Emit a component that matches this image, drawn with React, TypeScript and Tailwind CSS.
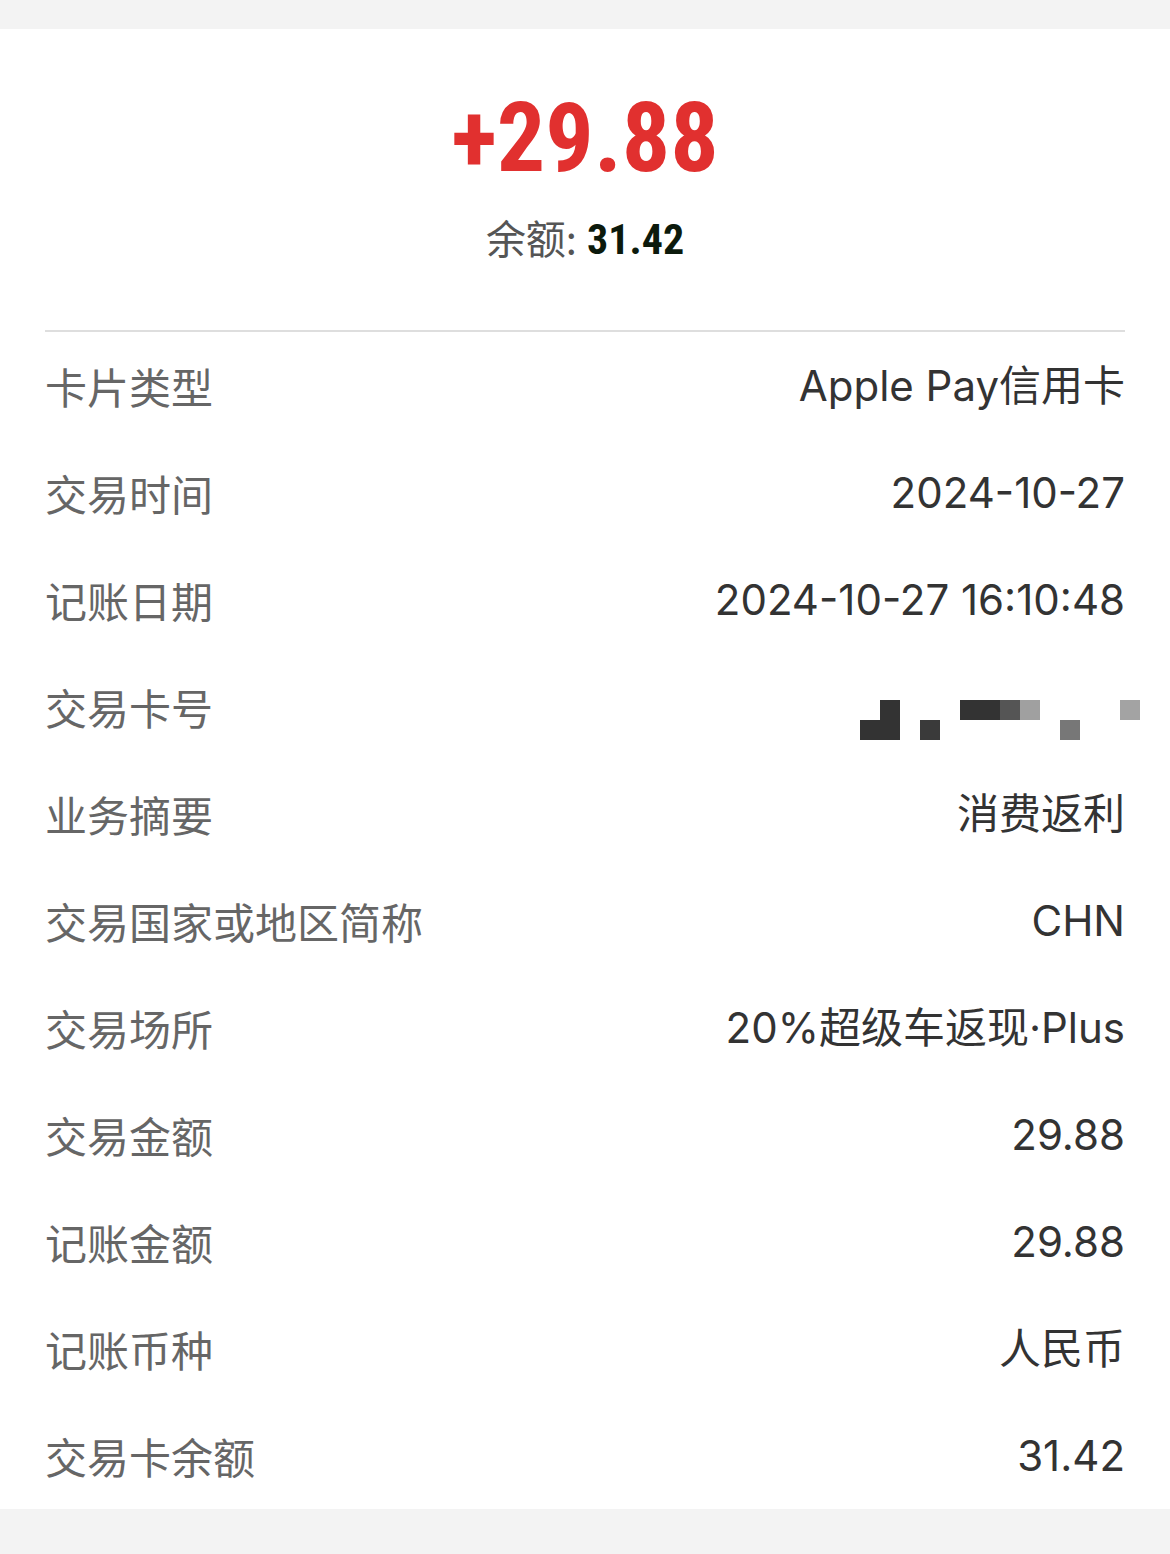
import React from 'react';

const rows: { label: string; value?: string }[] = [
  { label: '卡片类型', value: 'Apple Pay信用卡' },
  { label: '交易时间', value: '2024-10-27' },
  { label: '记账日期', value: '2024-10-27 16:10:48' },
  { label: '交易卡号' },
  { label: '业务摘要', value: '消费返利' },
  { label: '交易国家或地区简称', value: 'CHN' },
  { label: '交易场所', value: '20%超级车返现·Plus' },
  { label: '交易金额', value: '29.88' },
  { label: '记账金额', value: '29.88' },
  { label: '记账币种', value: '人民币' },
  { label: '交易卡余额', value: '31.42' },
];

// mosaic blocks covering the card number
const blocks = [
  { x: 20, y: 0, c: '#333333' },
  { x: 0, y: 20, c: '#333333' },
  { x: 20, y: 20, c: '#333333' },
  { x: 60, y: 20, c: '#3a3a3a' },
  { x: 100, y: 0, c: '#333333' },
  { x: 120, y: 0, c: '#333333' },
  { x: 140, y: 0, c: '#555555' },
  { x: 160, y: 0, c: '#a0a0a0' },
  { x: 200, y: 20, c: '#777777' },
  { x: 260, y: 0, c: '#a3a3a3' },
];

const Mosaic: React.FC = () => (
  <svg width="280" height="40" viewBox="0 0 280 40" className="-mr-[15px] mt-[26px]">
    {blocks.map((b, i) => (
      <rect key={i} x={b.x} y={b.y} width="20" height="20" fill={b.c} />
    ))}
  </svg>
);

const App: React.FC = () => {
  return (
    <div className="w-[1170px] h-[1554px] bg-[#f3f3f3] pt-[29px] font-['Inter','Noto_Sans_CJK_SC',sans-serif]">
      <div className="bg-white h-[1480px] px-[45px]">
        <div className="flex flex-col items-center pt-[58px] h-[301px]">
          <div className="text-[#e1302f] font-bold text-[96px] leading-[102px] font-['Liberation_Sans_Narrow','Roboto_Condensed',sans-serif]">
            +29.88
          </div>
          <div className="mt-[26px] flex items-baseline text-[40px] leading-[44px]">
            <span className="text-[#555555] font-['Noto_Sans_CJK_SC',sans-serif]">余额:</span>
            <span className="ml-[10px] text-[#0c1a0c] font-bold font-['Liberation_Sans_Narrow','Roboto_Condensed',sans-serif] text-[42px]">
              31.42
            </span>
          </div>
        </div>
        <div className="h-[2px] bg-[#dedede]"></div>
        <div>
          {rows.map((r) => (
            <div key={r.label} className="h-[107px] flex items-center justify-between">
              <span className="text-[42px] text-[#666666] font-['Noto_Sans_CJK_SC',sans-serif]">{r.label}</span>
              {r.value ? (
                <span className="text-[42px] text-[#333333]">{r.value}</span>
              ) : (
                <Mosaic />
              )}
            </div>
          ))}
        </div>
      </div>
    </div>
  );
};

export default App;
